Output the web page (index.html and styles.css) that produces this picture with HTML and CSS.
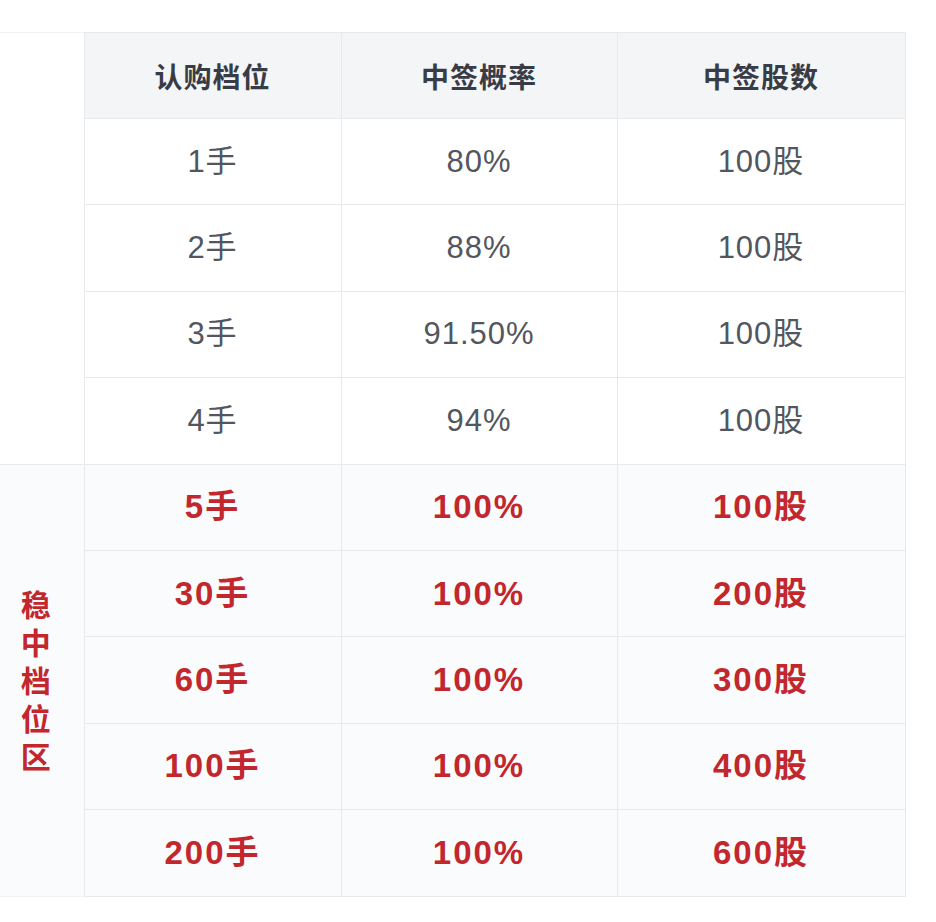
FILE: index.html
```html
<!DOCTYPE html>
<html lang="zh-CN">
<head>
<meta charset="utf-8">
<link rel="stylesheet" href="styles.css">
</head>
<body>
<table class="lottery">
  <colgroup>
    <col class="c0"><col class="c1"><col class="c2"><col class="c3">
  </colgroup>
  <tbody>
    <tr class="head">
      <td class="side side-plain" rowspan="5"></td>
      <th>认购档位</th>
      <th>中签概率</th>
      <th>中签股数</th>
    </tr>
    <tr class="row"><td>1手</td><td>80%</td><td>100股</td></tr>
    <tr class="row"><td>2手</td><td>88%</td><td>100股</td></tr>
    <tr class="row"><td>3手</td><td>91.50%</td><td>100股</td></tr>
    <tr class="row"><td>4手</td><td>94%</td><td>100股</td></tr>
    <tr class="row hot"><td class="side side-zone" rowspan="5"><span class="zone">稳中档位区</span></td><td>5手</td><td>100%</td><td>100股</td></tr>
    <tr class="row hot"><td>30手</td><td>100%</td><td>200股</td></tr>
    <tr class="row hot"><td>60手</td><td>100%</td><td>300股</td></tr>
    <tr class="row hot"><td>100手</td><td>100%</td><td>400股</td></tr>
    <tr class="row hot"><td>200手</td><td>100%</td><td>600股</td></tr>
  </tbody>
</table>
</body>
</html>
```
FILE: styles.css
```css
html, body {
  margin: 0;
  padding: 0;
  background: #ffffff;
}
body {
  padding-top: 32px;
  font-family: "Liberation Sans", "Noto Sans CJK SC", sans-serif;
}
.lottery {
  border-collapse: collapse;
  table-layout: fixed;
  width: 905px;
}
.c0 { width: 84px; }
.c1 { width: 257px; }
.c2 { width: 276px; }
.c3 { width: 288px; }

.lottery th,
.lottery td {
  border: 1px solid #e7e9ed;
  text-align: center;
  vertical-align: middle;
  padding: 0;
}
.head th {
  height: 85px;
  background: #f4f5f7;
  color: #383c46;
  font-size: 28px;
  font-weight: 700;
  letter-spacing: 1px;
}
.row td {
  height: 85.4px;
  color: #52565e;
  font-size: 31px;
  line-height: 34px;
  letter-spacing: 1px;
  background: #ffffff;
}
.row.hot td {
  background: #fafbfd;
  color: #c2272d;
  font-weight: 700;
  font-size: 33px;
  letter-spacing: 2px;
}
.lottery .side-plain {
  background: #ffffff;
  border-left: none;
  border-top-color: #f1f2f4;
}
.lottery .side-zone {
  background: #f7f9fc;
  border-left: none;
  border-bottom-color: #f1f2f5;
  padding-right: 18px;
}
.zone {
  display: inline-block;
  writing-mode: vertical-rl;
  text-orientation: upright;
  font-size: 30px;
  line-height: 30px;
  letter-spacing: 8px;
  font-weight: 700;
  color: #c2272d;
  margin-top: 16px;
}
```
